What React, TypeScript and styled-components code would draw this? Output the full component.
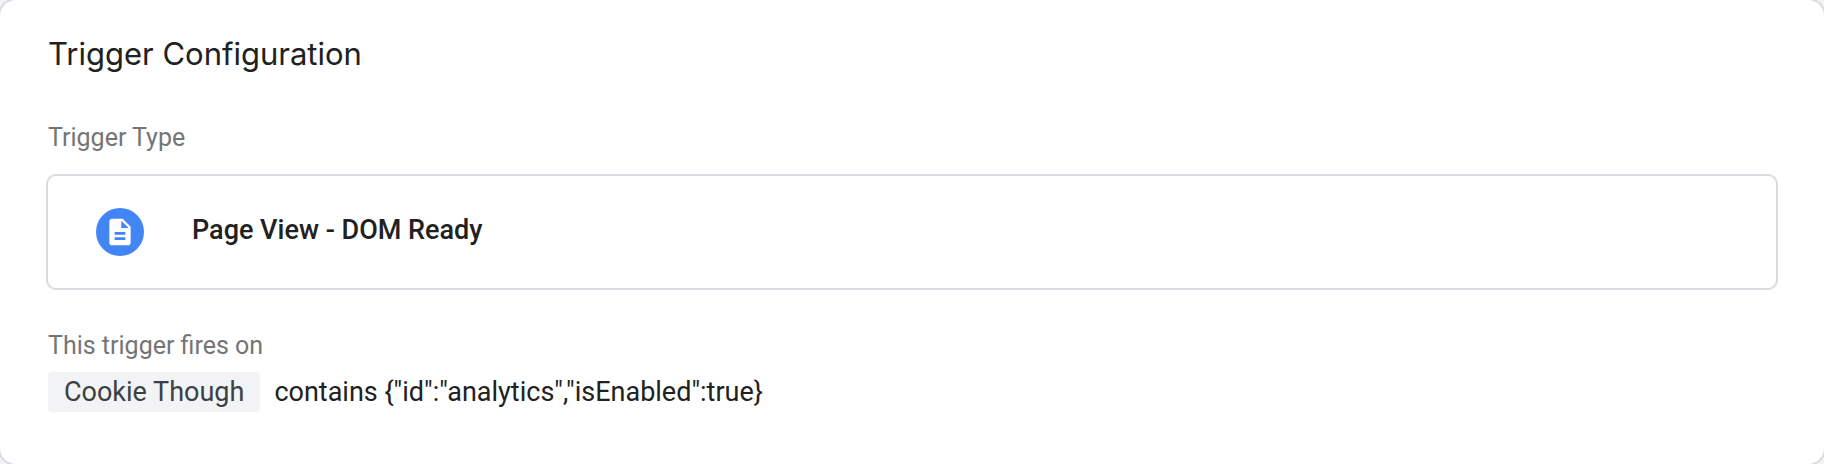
import styled, { createGlobalStyle } from "styled-components";

const GlobalStyle = createGlobalStyle`
  * {
    box-sizing: border-box;
  }

  body {
    margin: 0;
    background: #f1f3f4;
    color: #212121;
    font-family: Roboto, "Liberation Sans", sans-serif;
  }
`;

const Card = styled.section`
  padding: 32px 46px 52px;
  border-radius: 16px;
  background: #fff;
  box-shadow: 0 0 0 2px #dadbe0;
`;

const Title = styled.h2`
  margin: 0 0 46px;
  padding-left: 2px;
  font-family: "Google Sans", Inter, Roboto, sans-serif;
  font-size: 31px;
  font-weight: 400;
  line-height: 44px;
`;

const Label = styled.h3`
  margin: 0;
  padding-left: 2px;
  color: #757575;
  font-size: 25px;
  font-weight: 400;
  line-height: 32px;
`;

const TypeBox = styled.div`
  display: flex;
  align-items: center;
  gap: 48px;
  min-height: 116px;
  margin: 20px 0 40px;
  padding: 0 48px;
  border: 2px solid #dadbe0;
  border-radius: 10px;
`;

const TypeBadge = styled.span`
  display: flex;
  align-items: center;
  justify-content: center;
  width: 48px;
  height: 48px;
  border-radius: 50%;
  background: #4285f4;
`;

const TypeName = styled.span`
  padding-bottom: 4px;
  font-size: 27px;
  font-weight: 500;
  line-height: 32px;
`;

const Condition = styled.div`
  display: flex;
  flex-wrap: wrap;
  align-items: center;
  gap: 14px;
  margin-top: 10px;
  padding-left: 2px;
  font-size: 27px;
  line-height: 40px;
`;

const Variable = styled.span`
  padding: 0 16px;
  border-radius: 4px;
  background: #f1f3f4;
  color: #3c4043;
`;

function PageIcon() {
  return (
    <svg width="32" height="32" viewBox="0 0 24 24" fill="#fff" aria-hidden="true">
      <path d="M14 2H6c-1.100 0-1.990.9-1.990 2L4 20c0 1.100.89 2 1.990 2H18c1.100 0 2-.9 2-2V8l-6-6zm2 16H8v-2h8v2zm0-4H8v-2h8v2zm-3-5V3.500L18.500 9H13z" />
    </svg>
  );
}

export default function App() {
  return (
    <>
      <GlobalStyle />
      <Card>
        <Title>Trigger Configuration</Title>
        <Label>Trigger Type</Label>
        <TypeBox>
          <TypeBadge>
            <PageIcon />
          </TypeBadge>
          <TypeName>Page View - DOM Ready</TypeName>
        </TypeBox>
        <Label>This trigger fires on</Label>
        <Condition>
          <Variable>Cookie Though</Variable>
          <span>{'contains {"id":"analytics","isEnabled":true}'}</span>
        </Condition>
      </Card>
    </>
  );
}
